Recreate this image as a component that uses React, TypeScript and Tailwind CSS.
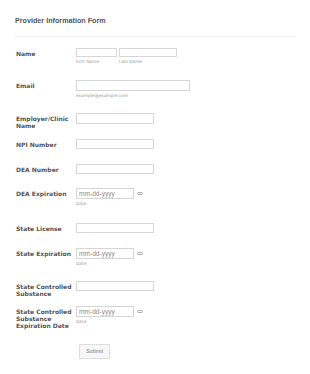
import React from 'react';

const labelFont = { fontFamily: '"DejaVu Sans", Verdana, sans-serif' };

function Label({ children }: { children: React.ReactNode }) {
  return (
    <div className="w-[61px] shrink-0 pl-[1px] pt-[2px] text-[6px] font-bold leading-[7px] text-[#555]" style={labelFont}>
      {children}
    </div>
  );
}

function Sub({ children, className = '' }: { children: React.ReactNode; className?: string }) {
  return (
    <div className={'mt-[2px] text-[4.3px] leading-[5px] text-[#9a9a9a] ' + className} style={labelFont}>
      {children}
    </div>
  );
}

function TextBox({ className }: { className: string }) {
  return <div className={'border border-[#d6d6d6] bg-white ' + className} />;
}

function DateField() {
  return (
    <div className="flex flex-col">
      <div className="flex items-center">
        <div className="flex h-[11px] w-[58px] items-center border border-[#d6d6d6] bg-white pl-[2px] font-['Liberation_Sans',Arial,sans-serif] text-[6.6px] text-[#8a8a8a]">
          mm-dd-yyyy
        </div>
        <span className="ml-[3px] h-[3px] w-[6px] rounded-full border border-[#a8a8a8]" />
      </div>
      <Sub>Date</Sub>
    </div>
  );
}

export default function App() {
  return (
    <div className="min-h-[374px] w-[310px] bg-white px-[15px] pt-[16px]">
      <h1 className="font-['Liberation_Sans',Arial,sans-serif] text-[7.2px] font-bold leading-[10px] text-[#555]">
        Provider Information Form
      </h1>
      <div className="mt-[10px] h-px bg-[#eeeeee]" />

      <div className="mt-[11px] flex flex-col">
        <div className="flex h-[32px]">
          <Label>Name</Label>
          <div className="flex gap-[2px]">
            <div className="flex flex-col">
              <TextBox className="h-[9px] w-[41px]" />
              <Sub>First Name</Sub>
            </div>
            <div className="flex flex-col">
              <TextBox className="h-[9px] w-[58px]" />
              <Sub>Last Name</Sub>
            </div>
          </div>
        </div>

        <div className="flex h-[33px]">
          <Label>Email</Label>
          <div className="flex flex-col">
            <TextBox className="h-[11px] w-[114px]" />
            <Sub>example@example.com</Sub>
          </div>
        </div>

        <div className="flex h-[26px]">
          <Label>Employer/Clinic Name</Label>
          <TextBox className="h-[11px] w-[78px]" />
        </div>

        <div className="flex h-[25px]">
          <Label>NPI Number</Label>
          <TextBox className="h-[10px] w-[78px]" />
        </div>

        <div className="flex h-[24px]">
          <Label>DEA Number</Label>
          <TextBox className="h-[10px] w-[78px]" />
        </div>

        <div className="flex h-[35px]">
          <Label>DEA Expiration</Label>
          <DateField />
        </div>

        <div className="flex h-[25px]">
          <Label>State License</Label>
          <TextBox className="h-[10px] w-[78px]" />
        </div>

        <div className="flex h-[33px]">
          <Label>State Expiration</Label>
          <DateField />
        </div>

        <div className="flex h-[25px]">
          <Label>State Controlled Substance</Label>
          <TextBox className="h-[10px] w-[78px]" />
        </div>

        <div className="flex h-[38px]">
          <Label>State Controlled Substance Expiration Date</Label>
          <DateField />
        </div>

        <div className="pl-[64px]">
          <button className="flex h-[15px] w-[31px] items-center justify-center rounded-[1px] border border-[#dddddd] bg-[#f7f7f7] font-['Liberation_Sans',Arial,sans-serif] text-[5.5px] text-[#777]">
            Submit
          </button>
        </div>
      </div>
    </div>
  );
}
